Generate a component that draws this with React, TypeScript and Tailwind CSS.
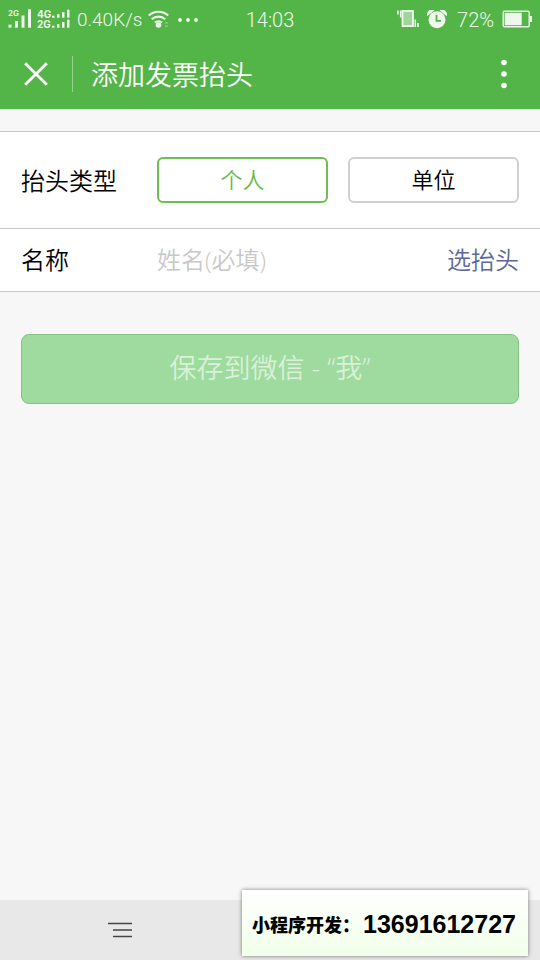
import { useState } from 'react';

type TitleType = 'personal' | 'company';

interface TypeOption {
  value: TitleType;
  label: string;
}

const typeOptions: TypeOption[] = [
  { value: 'personal', label: '个人' },
  { value: 'company', label: '单位' },
];

function SignalIcon() {
  return (
    <svg width="24" height="24" viewBox="0 0 24 24" fill="currentColor" aria-hidden="true">
      <text x="0" y="8" fontSize="8" fontWeight="600">
        2G
      </text>
      <rect x="0.5" y="16.7" width="3" height="3" />
      <rect x="7" y="13" width="3" height="6.7" />
      <rect x="13.5" y="7.5" width="3" height="12.2" />
      <rect x="20" y="1.3" width="3" height="18.4" />
    </svg>
  );
}

function DualSignalIcon() {
  return (
    <svg width="35" height="24" viewBox="0 0 35 24" fill="currentColor" aria-hidden="true">
      <text x="1" y="9.5" fontSize="10" fontWeight="700">
        4G
      </text>
      <text x="1" y="20" fontSize="10" fontWeight="700">
        2G
      </text>
      <rect x="16" y="7.7" width="2.5" height="2" />
      <rect x="21" y="6.2" width="2.5" height="3.5" />
      <rect x="26" y="4.2" width="2.5" height="5.5" />
      <rect x="31" y="1.7" width="2.5" height="8" />
      <rect x="16" y="17.7" width="2.5" height="2" />
      <rect x="21" y="16.2" width="2.5" height="3.5" />
      <rect x="26" y="14" width="2.5" height="5.7" />
      <rect x="31" y="11.7" width="2.5" height="8" />
    </svg>
  );
}

function WifiIcon() {
  return (
    <svg width="22" height="20" viewBox="0 0 22 20" fill="none" stroke="currentColor" aria-hidden="true">
      <path d="M.8 5.6a14 14 0 0 1 19.4 0" strokeWidth="2.1" />
      <path d="M3.8 9.2a10 10 0 0 1 13.4 0" strokeWidth="2.1" />
      <path d="M6.8 12.6a6 6 0 0 1 7.4 0" strokeWidth="1.9" />
      <circle cx="10.5" cy="15" r="2.8" fill="currentColor" stroke="none" />
      <path d="M16.5 13.5l2-2 2 2zM16.5 15.5l2 2 2-2z" fill="currentColor" stroke="none" opacity="0.4" />
    </svg>
  );
}

function VibrateIcon() {
  return (
    <svg width="22" height="20" viewBox="0 0 22 20" aria-hidden="true">
      <rect x="5.5" y="0.9" width="10.5" height="15.2" fill="#ffffff" fillOpacity="0.45" stroke="currentColor" strokeWidth="1.8" />
      <path d="M.9.5v4M3.7.5v7M18.3 9.5v7.5M21 13v4" stroke="currentColor" strokeWidth="1.6" />
    </svg>
  );
}

function AlarmIcon() {
  return (
    <svg width="20" height="20" viewBox="0 0 20 20" fill="currentColor" aria-hidden="true">
      <circle cx="10" cy="9.8" r="8.5" />
      <path d="M.8 5A4 4 0 0 1 6 .6zM19.2 5A4 4 0 0 0 14 .6z" stroke="currentColor" strokeWidth="1.4" />
      <path d="M9.5 4.8v6h4.5" fill="none" stroke="#53b447" strokeWidth="1.8" />
    </svg>
  );
}

function BatteryIcon() {
  return (
    <svg width="30" height="20" viewBox="0 0 30 20" aria-hidden="true">
      <rect x="1.2" y="1.3" width="26" height="15.4" rx="1.2" fill="none" stroke="currentColor" strokeWidth="1.4" />
      <rect x="2.7" y="2.8" width="17" height="12.4" fill="currentColor" />
      <rect x="28" y="6" width="2" height="6" fill="currentColor" />
    </svg>
  );
}

function StatusBar() {
  return (
    <div className="flex h-10 items-center px-2 font-[Roboto,sans-serif] text-xl text-[#f0f8ee]">
      <div className="flex flex-1 items-center">
        <div className="flex gap-1 font-[Inter,sans-serif]">
          <SignalIcon />
          <DualSignalIcon />
        </div>
        <span className="mr-1.5 ml-1.5 text-[19px] font-[350] whitespace-nowrap">0.40K/s</span>
        <div className="flex items-center gap-2">
          <WifiIcon />
          <svg width="22" height="4" viewBox="0 0 22 4" fill="currentColor" aria-hidden="true">
            <circle cx="2" cy="2" r="1.9" />
            <circle cx="10" cy="2" r="1.9" />
            <circle cx="18" cy="2" r="1.9" />
          </svg>
        </div>
      </div>
      <span className="font-[350]">14:03</span>
      <div className="flex flex-1 items-center justify-end gap-2">
        <div className="flex gap-2 pr-0.5">
          <VibrateIcon />
          <AlarmIcon />
        </div>
        <span className="font-[350]">72%</span>
        <BatteryIcon />
      </div>
    </div>
  );
}

function TitleBar() {
  return (
    <div className="flex h-[69px] items-center pr-5 pb-0.5 pl-6">
      <button type="button" aria-label="关闭">
        <svg width="24" height="24" viewBox="0 0 24 24" fill="none" stroke="currentColor" strokeWidth="2.8" className="block">
          <path d="M1.2 1.2l21.6 21.6M22.8 1.2L1.2 22.8" />
        </svg>
      </button>
      <div className="ml-6 h-9 w-px bg-white/40" />
      <h1 className="ml-[18px] flex-1 pt-0.5 text-[27px] leading-9 font-[350]">添加发票抬头</h1>
      <button type="button" aria-label="更多">
        <svg width="32" height="32" viewBox="0 0 32 32" fill="currentColor" className="block">
          <circle cx="16" cy="4.5" r="2.8" />
          <circle cx="16" cy="16" r="2.8" />
          <circle cx="16" cy="27.5" r="2.8" />
        </svg>
      </button>
    </div>
  );
}

export default function App() {
  const [type, setType] = useState<TitleType>('personal');
  const [name, setName] = useState('');

  return (
    <div className="flex min-h-screen flex-col bg-[#f7f7f7] font-['Open_Sans','Noto_Sans_CJK_SC',sans-serif] font-[350] text-black">
      <header className="bg-[#53b447] text-white">
        <StatusBar />
        <TitleBar />
      </header>

      <main className="flex-1 pt-[22px]">
        <form onSubmit={(e) => e.preventDefault()}>
          <div className="border-y border-[#c9c9c9] bg-white">
            {/* Title type */}
            <div className="flex items-center border-b border-[#c9c9c9] px-[21px] py-[25px] text-2xl">
              <span id="type-label" className="w-[136px] pt-0.5">
                抬头类型
              </span>
              <div role="group" aria-labelledby="type-label" className="flex flex-1 gap-5">
                {typeOptions.map((option) => (
                  <button
                    key={option.value}
                    type="button"
                    aria-pressed={type === option.value}
                    onClick={() => setType(option.value)}
                    className={`h-[46px] flex-1 rounded-md border-2 pb-0.5 text-[22px] leading-8 ${
                      type === option.value
                        ? 'border-[#6fbd55] text-[#68b948]'
                        : 'border-[#d0d0d0] text-black'
                    }`}
                  >
                    {option.label}
                  </button>
                ))}
              </div>
            </div>

            {/* Name */}
            <div className="flex h-[62px] items-center px-[21px] text-2xl">
              <label htmlFor="name" className="w-[136px]">
                名称
              </label>
              <input
                id="name"
                type="text"
                value={name}
                onChange={(e) => setName(e.target.value)}
                placeholder="姓名(必填)"
                className="min-w-0 flex-1 bg-transparent outline-none placeholder:text-[#c8c8c8]"
              />
              <button type="button" className="text-[#5c6899]">
                选抬头
              </button>
            </div>
          </div>

          <div className="px-[21px] pt-[42px]">
            <button
              type="submit"
              disabled={!name}
              className="h-[70px] w-full rounded-lg border border-[#85c185] bg-[#9fdb9f] pb-0.5 text-[27px] leading-9 text-[#d9f1d9]"
            >
              保存到微信 - “我”
            </button>
          </div>
        </form>
      </main>

      <footer className="relative flex h-[60px] items-center bg-[#e8e8e8] pl-[108px]">
        <button type="button" aria-label="菜单">
          <svg width="24" height="16" viewBox="0 0 24 16" stroke="#454545" strokeWidth="1.7" className="block">
            <path d="M0 1.5h24M5 8h19M5 14.5h19" />
          </svg>
        </button>
        <div className="absolute right-3 bottom-1 flex h-[66px] items-center gap-[3px] bg-linear-to-b from-white to-[#f1ffe9] pt-1 pr-3 pl-[10px] whitespace-nowrap shadow-[0_0_4px_rgba(0,0,0,0.5)]">
          <span className="text-lg font-black">小程序开发：</span>
          <span className="font-['Liberation_Sans',sans-serif] text-[25px] font-bold">13691612727</span>
        </div>
      </footer>
    </div>
  );
}
